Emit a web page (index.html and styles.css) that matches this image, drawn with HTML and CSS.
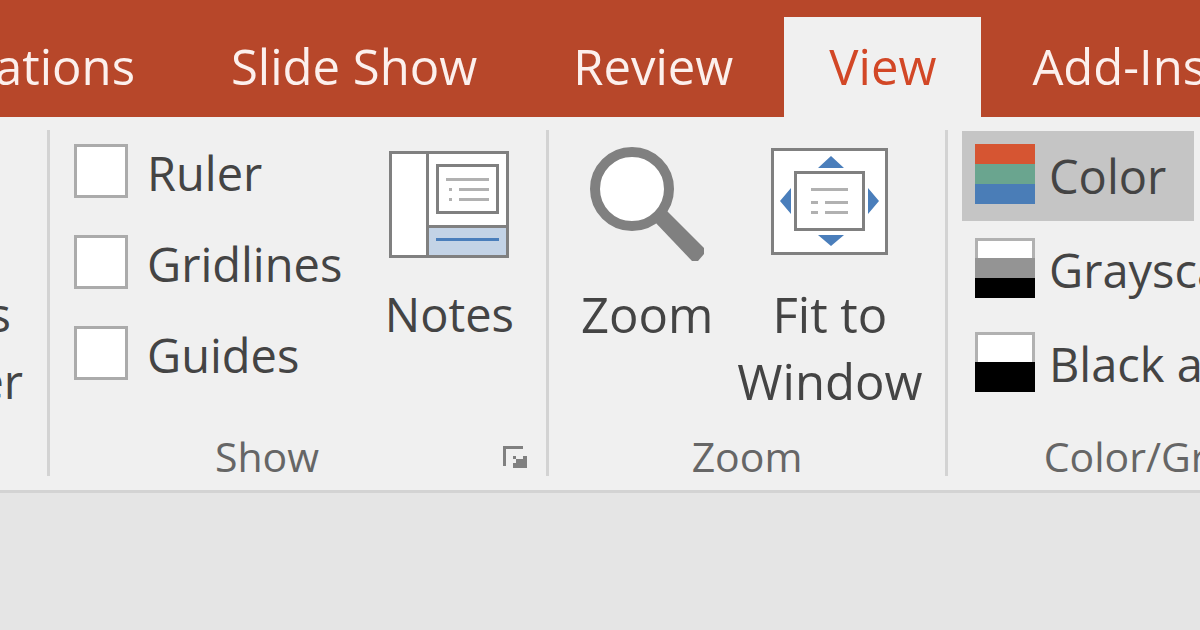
FILE: index.html
```html
<!DOCTYPE html>
<html lang="en">
<head>
<meta charset="utf-8">
<title>View ribbon</title>
<link rel="stylesheet" href="styles.css">
</head>
<body>
<nav class="tabs">
  <div class="tab-clip"><button class="tab">Animations</button></div>
  <button class="tab">Slide Show</button>
  <button class="tab">Review</button>
  <button class="tab tab-active">View</button>
  <button class="tab">Add-Ins</button>
</nav>
<main class="ribbon">
  <section class="group group-master">
    <button class="tool tool-compact"><span class="tool-icon"></span><span>Notes<br>Master</span></button>
  </section>
  <section class="group group-show">
    <div class="group-body">
      <div class="checks">
        <label class="check"><input type="checkbox" class="box"><span>Ruler</span></label>
        <label class="check"><input type="checkbox" class="box"><span>Gridlines</span></label>
        <label class="check"><input type="checkbox" class="box"><span>Guides</span></label>
      </div>
      <button class="tool tool-compact">
        <svg class="tool-icon" viewBox="0 0 120 120" aria-hidden="true">
          <path fill="#808080" d="M0 6h120v107H0z"/>
          <path fill="#fff" d="M3 9h34v101H3zM40 9h77v71H40z"/>
          <path fill="#c3d3e6" d="M40 83h77v27H40z"/>
          <path fill="#808080" d="M47 19h63v50H47z"/>
          <path fill="#fff" d="M50 22h57v44H50z"/>
          <path fill="#b1b1b1" d="M57 33h43v3H57zM60 43h3v3h-3zM70 43h30v3H70zM60 53h3v3h-3zM70 53h30v3H70z"/>
          <path fill="#4a7ebb" d="M47 93h63v3H47z"/>
        </svg>
        <span>Notes</span>
      </button>
    </div>
    <div class="group-foot">
      <h2 class="group-title">Show</h2>
      <button class="launcher" aria-label="Show settings">
        <svg class="launcher-icon" viewBox="0 0 24 24" aria-hidden="true">
          <path fill="#808080" d="M0 2h20v3H3v17H0zM10 12h3v3h7v-3h4v12H10v-5h3v-4h-3z"/>
        </svg>
      </button>
    </div>
  </section>
  <section class="group group-zoom">
    <div class="group-body">
      <button class="tool">
        <svg class="tool-icon" viewBox="0 0 120 120" aria-hidden="true">
          <path fill="#808080" d="M66 75l39 41h6l6-7v-6L78 64z"/>
          <circle cx="45" cy="44" r="37" fill="#fff" stroke="#808080" stroke-width="10"/>
        </svg>
        <span>Zoom</span>
      </button>
      <button class="tool">
        <svg class="tool-icon" viewBox="0 0 120 120" aria-hidden="true">
          <path fill="#808080" d="M1 3h117v107H1z"/>
          <path fill="#fff" d="M4 6h111v101H4z"/>
          <path fill="#808080" d="M24 26h71v60H24z"/>
          <path fill="#fff" d="M27 29h65v54H27z"/>
          <path fill="#b1b1b1" d="M41 43h37v3H41zM41 56h7v3h-7zM55 56h23v3H55zM41 66h7v3h-7zM55 66h23v3H55z"/>
          <path fill="#4a7ebb" d="M61 11l13 12H48zM61 101l13-11H48zM10 56l11-13v26zM109 56L98 43v26z"/>
        </svg>
        <span>Fit to<br>Window</span>
      </button>
    </div>
    <div class="group-foot"><h2 class="group-title">Zoom</h2></div>
  </section>
  <section class="group group-color">
    <div class="modes">
      <button class="mode mode-active">
        <svg class="mode-icon" viewBox="0 0 60 60" aria-hidden="true">
          <path fill="#d65532" d="M0 0h60v20H0z"/><path fill="#6aa58f" d="M0 20h60v20H0z"/><path fill="#4a7db7" d="M0 40h60v20H0z"/>
        </svg>
        <span>Color</span>
      </button>
      <button class="mode">
        <svg class="mode-icon" viewBox="0 0 60 60" aria-hidden="true">
          <path fill="#b1b1b1" d="M0 0h60v20H0z"/><path fill="#fff" d="M3 3h54v17H3z"/><path fill="#949494" d="M0 20h60v20H0z"/><path d="M0 40h60v20H0z"/>
        </svg>
        <span>Grayscale</span>
      </button>
      <button class="mode">
        <svg class="mode-icon" viewBox="0 0 60 60" aria-hidden="true">
          <path fill="#b1b1b1" d="M0 0h60v30H0z"/><path fill="#fff" d="M3 3h54v27H3z"/><path d="M0 30h60v30H0z"/>
        </svg>
        <span>Black and White</span>
      </button>
    </div>
    <div class="group-foot"><h2 class="group-title">Color/Grayscale</h2></div>
  </section>
</main>
</body>
</html>
```
FILE: styles.css
```css
* {
  box-sizing: border-box;
}

body {
  margin: 0;
  overflow: hidden;
  background: #e5e5e5;
  color: #444;
  font-family: "Open Sans", "Noto Sans", sans-serif;
  font-size: 49px;
  line-height: 67px;
}

button {
  margin: 0;
  padding: 0;
  border: 0;
  background: none;
  color: inherit;
  font: inherit;
  white-space: nowrap;
}

.tabs {
  display: flex;
  gap: 6px;
  padding-top: 17px;
  background: #b7472a;
  overflow: hidden;
}

.tab-clip {
  display: flex;
  flex: none;
  justify-content: flex-end;
  width: 180px;
}

.tab {
  flex: none;
  padding: 16px 45px 17px;
  color: #fcf0ed;
}

.tab-active {
  background: #f0f0f0;
  color: #d24726;
}

.ribbon {
  display: flex;
  padding: 13px 0 14px;
  border-bottom: 3px solid #d3d3d3;
  background: #f0f0f0;
  overflow: hidden;
}

.group {
  display: flex;
  flex: none;
  flex-direction: column;
  justify-content: space-between;
  gap: 21px;
  border-right: 3px solid #d3d3d3;
}

.group-master {
  width: 50px;
  align-items: flex-end;
  padding-right: 24px;
}

.group-show {
  width: 499px;
}

.group-zoom {
  width: 399px;
}

.group-color {
  flex: 1 0 auto;
  border-right: 0;
  padding-left: 14px;
}

.group-body {
  display: flex;
  align-items: flex-start;
}

.group-show .group-body {
  justify-content: space-between;
  padding: 0 32px 0 24px;
}

.group-zoom .group-body {
  gap: 24px;
  padding-left: 32px;
}

.checks {
  display: flex;
  flex-direction: column;
  gap: 37px;
  padding-top: 14px;
  font-size: 47px;
}

.check {
  display: flex;
  align-items: center;
  gap: 19px;
  height: 54px;
}

.check span,
.mode span {
  padding-top: 4px;
}

.box {
  appearance: none;
  width: 54px;
  height: 54px;
  margin: 0;
  border: 3px solid #ababab;
  background: #fff;
}

.tool {
  display: flex;
  flex-direction: column;
  align-items: center;
  gap: 16px;
  padding-top: 15px;
}

.tool-compact {
  font-size: 47px;
}

.tool-icon {
  width: 120px;
  height: 120px;
}

.group-foot {
  display: flex;
  align-items: center;
}

.group-title {
  flex: 1;
  margin: 0;
  color: #666;
  font-size: 41px;
  font-weight: 400;
  line-height: 40px;
  text-align: center;
}

.launcher {
  display: flex;
  padding: 0 19px;
}

.launcher-icon {
  width: 24px;
  height: 24px;
}

.modes {
  display: flex;
  flex-direction: column;
  align-items: flex-start;
  gap: 4px;
  padding-top: 1px;
  font-size: 47px;
}

.mode {
  display: flex;
  align-items: center;
  gap: 14px;
  height: 90px;
  padding: 0 28px 4px 13px;
}

.mode-active {
  background: #c5c5c5;
}

.mode-icon {
  width: 60px;
  height: 60px;
}
```
